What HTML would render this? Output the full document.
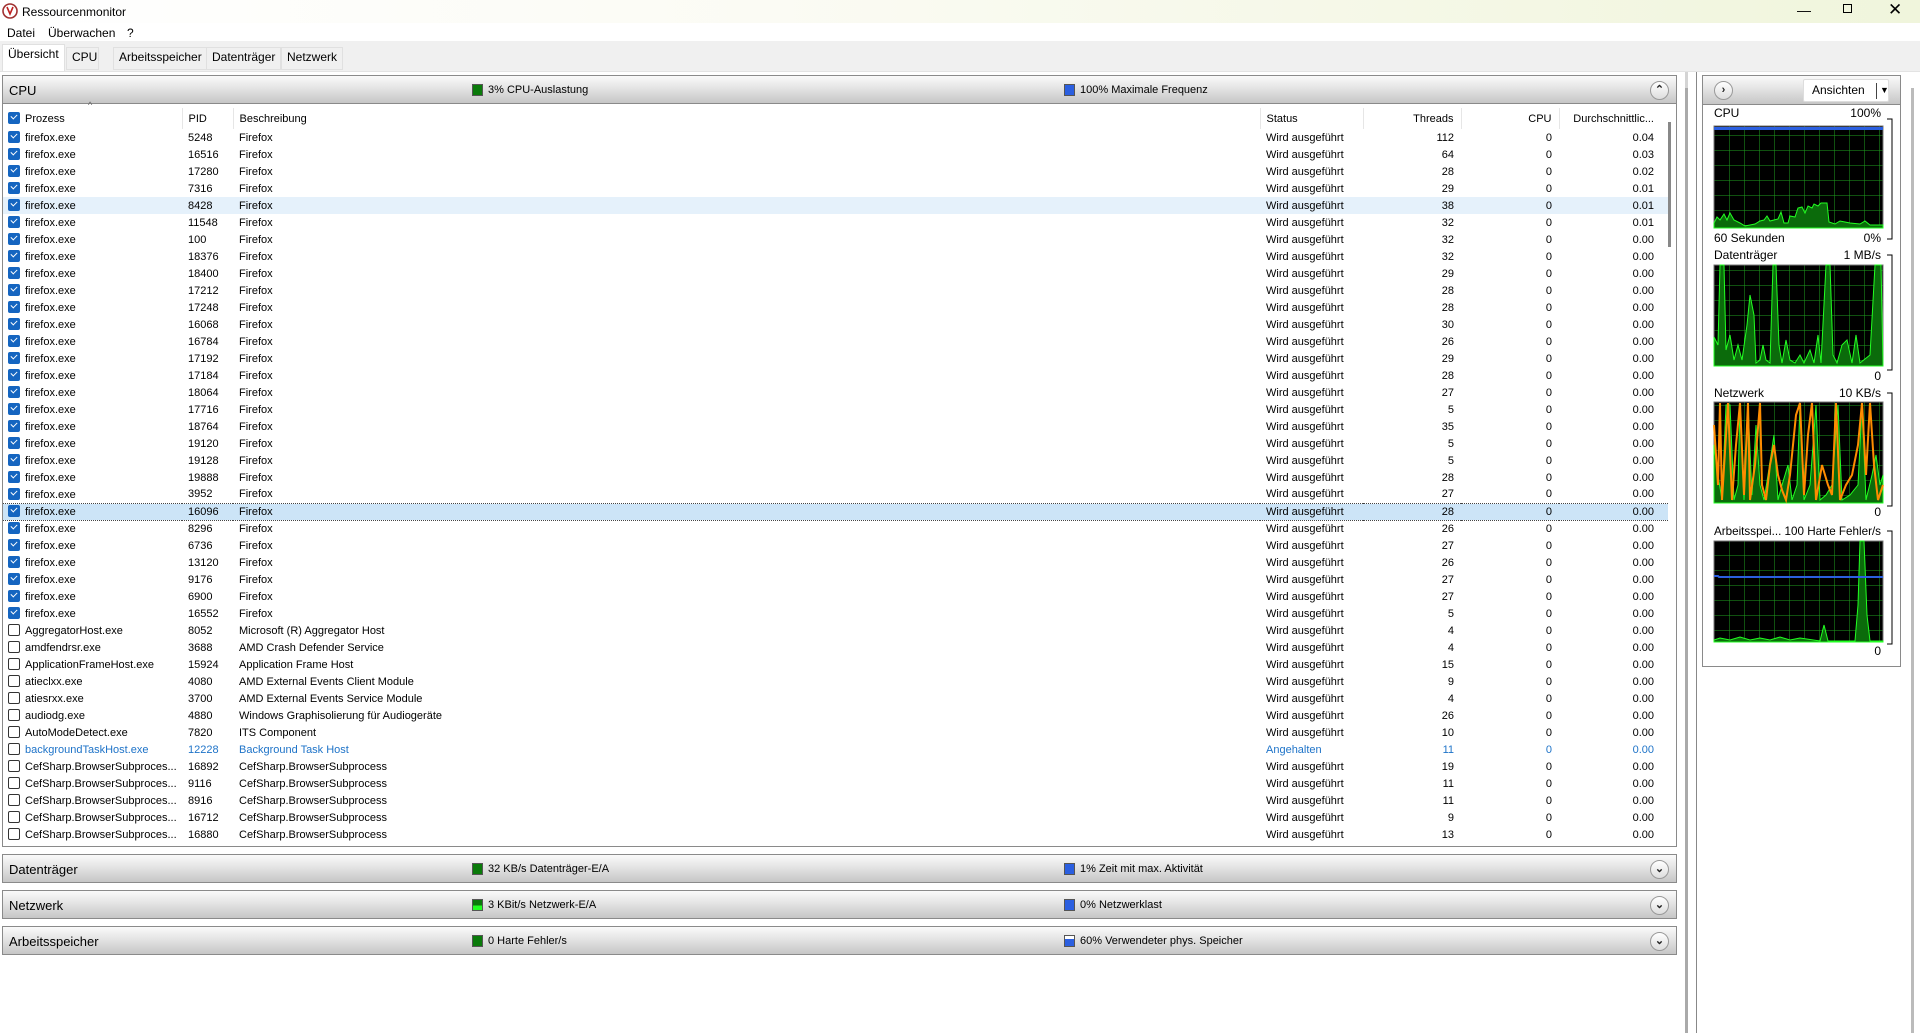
<!DOCTYPE html>
<html><head><meta charset="utf-8"><style>
*{box-sizing:border-box;margin:0;padding:0}
body{width:1920px;height:1033px;overflow:hidden;background:#fff;font-family:"Liberation Sans",sans-serif;font-size:11px;color:#000;position:relative}
.abs{position:absolute}
#title{left:0;top:0;width:1920px;height:23px;background:linear-gradient(90deg,#fff 0%,#fbfbf4 40%,#f0f5dc 100%)}
#menu{left:0;top:23px;width:1920px;height:18px;background:#fff}
#tabs{left:0;top:41px;width:1920px;height:31px;background:#f0f0f0;border-bottom:1px solid #e3e3e3}
.tab{position:absolute;top:6px;height:23px;line-height:18px;font-size:12px;padding:0 5px;border:1px solid #e0e0e0;background:#f0f0f0}
.sech{position:absolute;left:2px;width:1675px;height:29px;border:1px solid #8a8a8a;background:linear-gradient(#fafafa,#e4e4e4 45%,#c6c6c6);font-size:13px}
.sech .t{position:absolute;left:6px;top:7px}
.ind{position:absolute;top:8px;width:11px;height:12px;border:1px solid #555;background:#0a7a0a}
.ind.b{background:#2b5fe0}
.it{position:absolute;top:8px;font-size:11px}
.circ{position:absolute;top:5px;width:19px;height:19px;border-radius:50%;border:1px solid #999;background:linear-gradient(#fff,#ddd);font-size:11px;text-align:center;line-height:17px;font-weight:bold;color:#222}
table{border-collapse:collapse;table-layout:fixed;position:absolute;left:3px;top:108px;width:1665px}
td{height:17px;padding:0 0 0 6px;white-space:nowrap;overflow:hidden}
td.r{text-align:right;padding:0 7px 0 0}
td.l{text-align:right;padding:0 14px 0 0}
th{height:21px;font-weight:normal;text-align:left;padding:0 0 0 6px;border-right:1px solid #e6e6e6}
th.r{text-align:right;padding-right:7px}
.cb{display:inline-block;width:12px;height:12px;border-radius:2px;background:#1565c0;vertical-align:-2px;margin-right:4px;position:relative;left:-1px}
.cb:after{content:"";position:absolute;left:3px;top:2px;width:5px;height:3px;border-left:1.3px solid #fff;border-bottom:1.3px solid #fff;transform:rotate(-45deg)}
.cb.u{background:#fff;border:1px solid #333}
.cb.u:after{display:none}
tr.hov td{background:#e5f1fb}
tr.sel td{background:#cce4f7;border-top:1px dotted #444;border-bottom:1px dotted #444}
tr.blu td{color:#1e73c8}
</style></head><body>
<div id="title" class="abs">
<svg class="abs" style="left:2px;top:3px" width="16" height="16"><circle cx="8" cy="8" r="7" fill="#fff" stroke="#a03030" stroke-width="1.6"/><path d="M5 4 L8 11 L11 4" stroke="#c02020" stroke-width="1.6" fill="none"/></svg>
<span class="abs" style="left:22px;top:5px;font-size:12px">Ressourcenmonitor</span>
<span class="abs" style="left:1797px;top:2px;font-size:14px">&#8212;</span>
<span class="abs" style="left:1843px;top:4px;width:9px;height:9px;border:1px solid #000"></span>
<span class="abs" style="left:1888px;top:0px;font-size:17px">&#10005;</span>
</div>
<div id="menu" class="abs"><span class="abs" style="left:7px;top:3px;font-size:12px">Datei</span><span class="abs" style="left:48px;top:3px;font-size:12px">Überwachen</span><span class="abs" style="left:127px;top:3px;font-size:12px">?</span></div>
<div id="tabs" class="abs">
<div class="tab" style="left:2px;top:3px;height:27px;background:#fff;border-bottom:none">Übersicht</div>
<div class="tab" style="left:66px;width:33px">CPU</div>
<div class="tab" style="left:113px">Arbeitsspeicher</div>
<div class="tab" style="left:206px">Datenträger</div>
<div class="tab" style="left:281px">Netzwerk</div>
</div>

<div class="abs" style="left:0;top:72px;width:1688px;height:961px;border-right:3px solid #d4d4d4"></div>
<div class="abs" style="left:1696px;top:72px;width:1px;height:961px;background:#888"></div>
<div class="abs" style="left:1911px;top:88px;width:3px;height:945px;background:#bbb"></div>
<div class="abs" style="left:1685px;top:88px;width:3px;height:945px;background:#aaa"></div>

<div class="abs" style="left:2px;top:75px;width:1675px;height:772px;border:1px solid #8a8a8a;background:#fff"></div>
<div class="sech" style="top:75px"><span class="t">CPU</span><span class="ind" style="left:469px"></span><span class="it" style="left:485px">3% CPU-Auslastung</span><span class="ind b" style="left:1061px"></span><span class="it" style="left:1077px">100% Maximale Frequenz</span><span class="circ" style="left:1647px">&#8963;</span></div>
<div class="abs" style="left:1668px;top:122px;width:3px;height:125px;background:#888"></div>
<span class="abs" style="left:88px;top:100px;font-size:9px;color:#666">^</span>
<table>
<colgroup><col style="width:179px"><col style="width:51px"><col style="width:1027px"><col style="width:103px"><col style="width:98px"><col style="width:98px"><col style="width:109px"></colgroup>
<tr><th><span class="cb"></span>Prozess</th><th>PID</th><th>Beschreibung</th><th>Status</th><th class="r">Threads</th><th class="r">CPU</th><th class="r" style="border:none;padding-right:14px">Durchschnittlic...</th></tr>
<tr><td><span class="cb"></span>firefox.exe</td><td>5248</td><td>Firefox</td><td>Wird ausgeführt</td><td class="r">112</td><td class="r">0</td><td class="l">0.04</td></tr>
<tr><td><span class="cb"></span>firefox.exe</td><td>16516</td><td>Firefox</td><td>Wird ausgeführt</td><td class="r">64</td><td class="r">0</td><td class="l">0.03</td></tr>
<tr><td><span class="cb"></span>firefox.exe</td><td>17280</td><td>Firefox</td><td>Wird ausgeführt</td><td class="r">28</td><td class="r">0</td><td class="l">0.02</td></tr>
<tr><td><span class="cb"></span>firefox.exe</td><td>7316</td><td>Firefox</td><td>Wird ausgeführt</td><td class="r">29</td><td class="r">0</td><td class="l">0.01</td></tr>
<tr class="hov"><td><span class="cb"></span>firefox.exe</td><td>8428</td><td>Firefox</td><td>Wird ausgeführt</td><td class="r">38</td><td class="r">0</td><td class="l">0.01</td></tr>
<tr><td><span class="cb"></span>firefox.exe</td><td>11548</td><td>Firefox</td><td>Wird ausgeführt</td><td class="r">32</td><td class="r">0</td><td class="l">0.01</td></tr>
<tr><td><span class="cb"></span>firefox.exe</td><td>100</td><td>Firefox</td><td>Wird ausgeführt</td><td class="r">32</td><td class="r">0</td><td class="l">0.00</td></tr>
<tr><td><span class="cb"></span>firefox.exe</td><td>18376</td><td>Firefox</td><td>Wird ausgeführt</td><td class="r">32</td><td class="r">0</td><td class="l">0.00</td></tr>
<tr><td><span class="cb"></span>firefox.exe</td><td>18400</td><td>Firefox</td><td>Wird ausgeführt</td><td class="r">29</td><td class="r">0</td><td class="l">0.00</td></tr>
<tr><td><span class="cb"></span>firefox.exe</td><td>17212</td><td>Firefox</td><td>Wird ausgeführt</td><td class="r">28</td><td class="r">0</td><td class="l">0.00</td></tr>
<tr><td><span class="cb"></span>firefox.exe</td><td>17248</td><td>Firefox</td><td>Wird ausgeführt</td><td class="r">28</td><td class="r">0</td><td class="l">0.00</td></tr>
<tr><td><span class="cb"></span>firefox.exe</td><td>16068</td><td>Firefox</td><td>Wird ausgeführt</td><td class="r">30</td><td class="r">0</td><td class="l">0.00</td></tr>
<tr><td><span class="cb"></span>firefox.exe</td><td>16784</td><td>Firefox</td><td>Wird ausgeführt</td><td class="r">26</td><td class="r">0</td><td class="l">0.00</td></tr>
<tr><td><span class="cb"></span>firefox.exe</td><td>17192</td><td>Firefox</td><td>Wird ausgeführt</td><td class="r">29</td><td class="r">0</td><td class="l">0.00</td></tr>
<tr><td><span class="cb"></span>firefox.exe</td><td>17184</td><td>Firefox</td><td>Wird ausgeführt</td><td class="r">28</td><td class="r">0</td><td class="l">0.00</td></tr>
<tr><td><span class="cb"></span>firefox.exe</td><td>18064</td><td>Firefox</td><td>Wird ausgeführt</td><td class="r">27</td><td class="r">0</td><td class="l">0.00</td></tr>
<tr><td><span class="cb"></span>firefox.exe</td><td>17716</td><td>Firefox</td><td>Wird ausgeführt</td><td class="r">5</td><td class="r">0</td><td class="l">0.00</td></tr>
<tr><td><span class="cb"></span>firefox.exe</td><td>18764</td><td>Firefox</td><td>Wird ausgeführt</td><td class="r">35</td><td class="r">0</td><td class="l">0.00</td></tr>
<tr><td><span class="cb"></span>firefox.exe</td><td>19120</td><td>Firefox</td><td>Wird ausgeführt</td><td class="r">5</td><td class="r">0</td><td class="l">0.00</td></tr>
<tr><td><span class="cb"></span>firefox.exe</td><td>19128</td><td>Firefox</td><td>Wird ausgeführt</td><td class="r">5</td><td class="r">0</td><td class="l">0.00</td></tr>
<tr><td><span class="cb"></span>firefox.exe</td><td>19888</td><td>Firefox</td><td>Wird ausgeführt</td><td class="r">28</td><td class="r">0</td><td class="l">0.00</td></tr>
<tr><td><span class="cb"></span>firefox.exe</td><td>3952</td><td>Firefox</td><td>Wird ausgeführt</td><td class="r">27</td><td class="r">0</td><td class="l">0.00</td></tr>
<tr class="sel"><td><span class="cb"></span>firefox.exe</td><td>16096</td><td>Firefox</td><td>Wird ausgeführt</td><td class="r">28</td><td class="r">0</td><td class="l">0.00</td></tr>
<tr><td><span class="cb"></span>firefox.exe</td><td>8296</td><td>Firefox</td><td>Wird ausgeführt</td><td class="r">26</td><td class="r">0</td><td class="l">0.00</td></tr>
<tr><td><span class="cb"></span>firefox.exe</td><td>6736</td><td>Firefox</td><td>Wird ausgeführt</td><td class="r">27</td><td class="r">0</td><td class="l">0.00</td></tr>
<tr><td><span class="cb"></span>firefox.exe</td><td>13120</td><td>Firefox</td><td>Wird ausgeführt</td><td class="r">26</td><td class="r">0</td><td class="l">0.00</td></tr>
<tr><td><span class="cb"></span>firefox.exe</td><td>9176</td><td>Firefox</td><td>Wird ausgeführt</td><td class="r">27</td><td class="r">0</td><td class="l">0.00</td></tr>
<tr><td><span class="cb"></span>firefox.exe</td><td>6900</td><td>Firefox</td><td>Wird ausgeführt</td><td class="r">27</td><td class="r">0</td><td class="l">0.00</td></tr>
<tr><td><span class="cb"></span>firefox.exe</td><td>16552</td><td>Firefox</td><td>Wird ausgeführt</td><td class="r">5</td><td class="r">0</td><td class="l">0.00</td></tr>
<tr><td><span class="cb u"></span>AggregatorHost.exe</td><td>8052</td><td>Microsoft (R) Aggregator Host</td><td>Wird ausgeführt</td><td class="r">4</td><td class="r">0</td><td class="l">0.00</td></tr>
<tr><td><span class="cb u"></span>amdfendrsr.exe</td><td>3688</td><td>AMD Crash Defender Service</td><td>Wird ausgeführt</td><td class="r">4</td><td class="r">0</td><td class="l">0.00</td></tr>
<tr><td><span class="cb u"></span>ApplicationFrameHost.exe</td><td>15924</td><td>Application Frame Host</td><td>Wird ausgeführt</td><td class="r">15</td><td class="r">0</td><td class="l">0.00</td></tr>
<tr><td><span class="cb u"></span>atieclxx.exe</td><td>4080</td><td>AMD External Events Client Module</td><td>Wird ausgeführt</td><td class="r">9</td><td class="r">0</td><td class="l">0.00</td></tr>
<tr><td><span class="cb u"></span>atiesrxx.exe</td><td>3700</td><td>AMD External Events Service Module</td><td>Wird ausgeführt</td><td class="r">4</td><td class="r">0</td><td class="l">0.00</td></tr>
<tr><td><span class="cb u"></span>audiodg.exe</td><td>4880</td><td>Windows Graphisolierung für Audiogeräte</td><td>Wird ausgeführt</td><td class="r">26</td><td class="r">0</td><td class="l">0.00</td></tr>
<tr><td><span class="cb u"></span>AutoModeDetect.exe</td><td>7820</td><td>ITS Component</td><td>Wird ausgeführt</td><td class="r">10</td><td class="r">0</td><td class="l">0.00</td></tr>
<tr class="blu"><td><span class="cb u"></span>backgroundTaskHost.exe</td><td>12228</td><td>Background Task Host</td><td>Angehalten</td><td class="r">11</td><td class="r">0</td><td class="l">0.00</td></tr>
<tr><td><span class="cb u"></span>CefSharp.BrowserSubproces...</td><td>16892</td><td>CefSharp.BrowserSubprocess</td><td>Wird ausgeführt</td><td class="r">19</td><td class="r">0</td><td class="l">0.00</td></tr>
<tr><td><span class="cb u"></span>CefSharp.BrowserSubproces...</td><td>9116</td><td>CefSharp.BrowserSubprocess</td><td>Wird ausgeführt</td><td class="r">11</td><td class="r">0</td><td class="l">0.00</td></tr>
<tr><td><span class="cb u"></span>CefSharp.BrowserSubproces...</td><td>8916</td><td>CefSharp.BrowserSubprocess</td><td>Wird ausgeführt</td><td class="r">11</td><td class="r">0</td><td class="l">0.00</td></tr>
<tr><td><span class="cb u"></span>CefSharp.BrowserSubproces...</td><td>16712</td><td>CefSharp.BrowserSubprocess</td><td>Wird ausgeführt</td><td class="r">9</td><td class="r">0</td><td class="l">0.00</td></tr>
<tr><td><span class="cb u"></span>CefSharp.BrowserSubproces...</td><td>16880</td><td>CefSharp.BrowserSubprocess</td><td>Wird ausgeführt</td><td class="r">13</td><td class="r">0</td><td class="l">0.00</td></tr>
</table>
<div class="abs" style="left:3px;top:843px;width:1673px;height:3px;background:#fff"></div>

<div class="sech" style="top:854px"><span class="t">Datenträger</span><span class="ind" style="left:469px"></span><span class="it" style="left:485px">32 KB/s Datenträger-E/A</span><span class="ind b" style="left:1061px"></span><span class="it" style="left:1077px">1% Zeit mit max. Aktivität</span><span class="circ" style="left:1647px">&#8964;</span></div>
<div class="sech" style="top:890px"><span class="t">Netzwerk</span><span class="ind" style="left:469px;background:linear-gradient(#0a7a0a 55%,#2f2 55%)"></span><span class="it" style="left:485px">3 KBit/s Netzwerk-E/A</span><span class="ind b" style="left:1061px"></span><span class="it" style="left:1077px">0% Netzwerklast</span><span class="circ" style="left:1647px">&#8964;</span></div>
<div class="sech" style="top:926px"><span class="t">Arbeitsspeicher</span><span class="ind" style="left:469px"></span><span class="it" style="left:485px">0 Harte Fehler/s</span><span class="ind b" style="left:1061px;background:linear-gradient(#fff 30%,#2b5fe0 30%)"></span><span class="it" style="left:1077px">60% Verwendeter phys. Speicher</span><span class="circ" style="left:1647px">&#8964;</span></div>

<div class="abs" style="left:1702px;top:75px;width:199px;height:592px;border:1px solid #8a8a8a;background:#fff"></div>
<div class="abs" style="left:1702px;top:75px;width:199px;height:30px;border:1px solid #8a8a8a;background:linear-gradient(#fafafa,#e4e4e4 45%,#c6c6c6)">
<span class="circ" style="left:11px;top:5px">&#8250;</span>
<div class="abs" style="left:100px;top:3px;width:86px;height:23px;background:#fff;border:1px solid #ddd;border-radius:2px;font-size:12px;line-height:21px;padding-left:8px">Ansichten<span class="abs" style="left:72px;top:3px;width:1px;height:16px;background:#444"></span><span class="abs" style="left:76px;top:0;font-size:9px">&#9660;</span></div>
</div>

<svg class="abs" style="left:1700px;top:105px" width="210" height="560" font-family="Liberation Sans" font-size="12">
<defs>
<pattern id="g" x="14" y="0" width="15" height="15" patternUnits="userSpaceOnUse"><rect width="15" height="15" fill="#000"/><path d="M0 0V15M0 0H15" stroke="#1fa01f" stroke-width="1"/></pattern>
</defs>
<text x="14" y="12">CPU</text><text x="181" y="12" text-anchor="end">100%</text>
<rect x="14" y="21" width="169" height="102" fill="url(#g)" stroke="#777"/>
<rect x="14" y="22" width="169" height="3" fill="#2b5fe0"/>
<path d="M14 118 L17 112 L20 115 L24 109 L27 115 L30 108 L34 115 L40 118 L45 121 L50 120 L55 119 L60 116 L64 115 L67 111 L70 116 L78 114 L81 107 L84 118 L88 118 L90 111 L95 112 L98 103 L102 102 L105 108 L108 101 L112 103 L114 99 L118 101 L121 98 L127 98 L129 117 L135 119 L140 116 L145 117 L150 118 L160 119 L165 116 L170 120 L183 120 L183 123 L14 123Z" fill="#0b6b0b" stroke="#2f2"/>
<text x="14" y="137">60 Sekunden</text><text x="181" y="137" text-anchor="end">0%</text>
<path d="M187 14H192V134H187" fill="none" stroke="#000"/>
<text x="14" y="154">Datenträger</text><text x="181" y="154" text-anchor="end">1 MB/s</text>
<path d="M187 150H192V265H187" fill="none" stroke="#000"/>
<rect x="14" y="160" width="169" height="101" fill="url(#g)" stroke="#777"/>
<path d="M14 232 L18 240 L20 160 L24 160 L26 245 L30 230 L34 255 L38 240 L42 255 L47 220 L50 190 L54 210 L56 258 L60 255 L63 240 L66 255 L70 258 L73 160 L76 160 L79 240 L82 258 L86 235 L90 255 L95 258 L100 250 L104 258 L110 245 L114 258 L118 230 L121 258 L126 160 L130 160 L133 250 L137 258 L142 240 L147 235 L152 258 L156 230 L160 258 L170 250 L175 160 L181 160 L183 258 L183 261 L14 261Z" fill="#0b6b0b" stroke="#2f2"/>
<text x="181" y="275" text-anchor="end">0</text>
<text x="14" y="292">Netzwerk</text><text x="181" y="292" text-anchor="end">10 KB/s</text>
<path d="M187 288H192V401H187" fill="none" stroke="#000"/>
<rect x="14" y="297" width="169" height="101" fill="url(#g)" stroke="#777"/>
<path d="M14 340 L18 370 L22 395 L26 300 L30 300 L34 395 L38 380 L40 300 L44 395 L48 300 L52 390 L56 320 L60 380 L64 395 L68 370 L74 330 L78 395 L82 380 L88 360 L92 395 L97 380 L100 300 L104 395 L110 380 L116 300 L120 395 L126 390 L132 380 L138 300 L142 395 L150 390 L158 380 L162 300 L166 395 L172 370 L176 350 L180 380 L183 370 L183 398 L14 398Z" fill="#0b6b0b" stroke="#2f2"/>
<path d="M14 320 L18 380 L20 298 L22 395 L28 298 L32 395 L36 340 L40 298 L44 390 L48 298 L50 395 L55 360 L60 298 L62 380 L66 395 L70 360 L74 340 L78 370 L82 385 L86 395 L90 370 L96 310 L100 298 L104 390 L108 330 L112 298 L116 395 L122 360 L128 380 L132 390 L136 298 L140 395 L146 380 L152 370 L158 340 L162 298 L166 370 L170 298 L174 360 L178 395 L183 380" fill="none" stroke="#ff8c00" stroke-width="2"/>
<text x="181" y="411" text-anchor="end">0</text>
<text x="14" y="430" textLength="167" lengthAdjust="spacingAndGlyphs">Arbeitsspei... 100 Harte Fehler/s</text>
<path d="M187 426H192V539H187" fill="none" stroke="#000"/>
<rect x="14" y="436" width="169" height="101" fill="url(#g)" stroke="#777"/>
<path d="M14 535 L20 533 L30 535 L40 532 L50 535 L60 533 L70 535 L80 532 L90 535 L100 533 L120 536 L124 520 L128 536 L155 536 L158 500 L160 436 L164 436 L167 510 L170 536 L183 536 L183 537 L14 537Z" fill="#0b6b0b" stroke="#2f2"/>
<path d="M14 471 L18 471 L19 472 L183 472" stroke="#2b5fe0" stroke-width="2" fill="none"/>
<text x="181" y="550" text-anchor="end">0</text>
</svg>
</body></html>
